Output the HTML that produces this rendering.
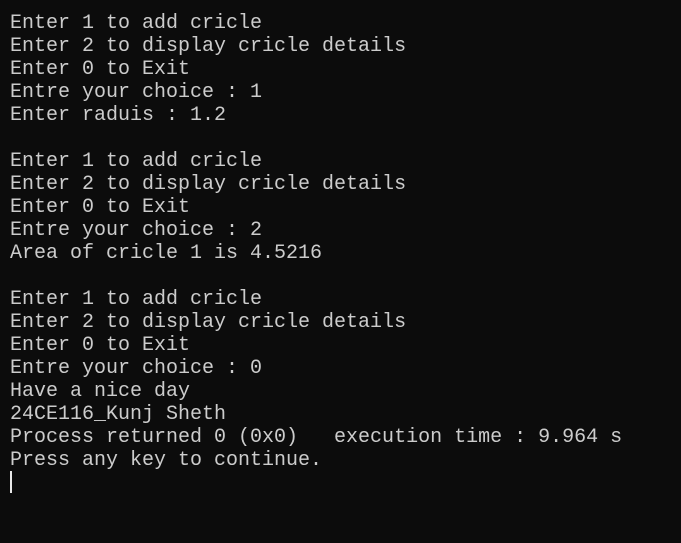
<!DOCTYPE html>
<html><head><style>
html,body{margin:0;padding:0;background:#0c0c0c;width:681px;height:543px;overflow:hidden}
pre{margin:0;position:absolute;left:10px;top:12px;font-family:"Liberation Mono","DejaVu Sans Mono",monospace;font-size:20px;line-height:23px;color:#cccccc;white-space:pre}
.cur{position:absolute;left:10px;top:471px;width:2px;height:22px;background:#e8e8e8}
</style></head><body>
<pre>Enter 1 to add cricle
Enter 2 to display cricle details
Enter 0 to Exit
Entre your choice : 1
Enter raduis : 1.2

Enter 1 to add cricle
Enter 2 to display cricle details
Enter 0 to Exit
Entre your choice : 2
Area of cricle 1 is 4.5216

Enter 1 to add cricle
Enter 2 to display cricle details
Enter 0 to Exit
Entre your choice : 0
Have a nice day
24CE116_Kunj Sheth
Process returned 0 (0x0)   execution time : 9.964 s
Press any key to continue.</pre>
<div class="cur"></div>
</body></html>
